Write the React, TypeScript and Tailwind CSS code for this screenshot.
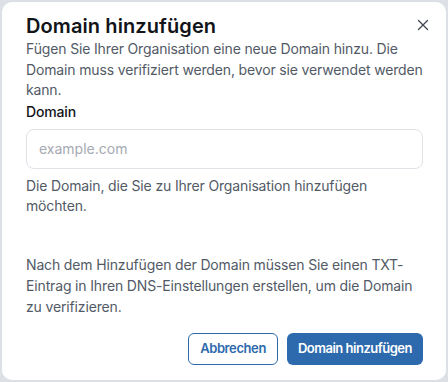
import React from "react";

export default function App() {
  return (
    <div className="w-[448px] h-[382px] bg-[#dde1e6] p-[2px]" style={{ fontFamily: "Inter, 'Noto Sans', sans-serif" }}>
      <div className="h-full w-full bg-white rounded-[10px] pl-[24px] pr-[23px] pt-[11px] flex flex-col">
        <div className="flex items-start justify-between">
          <h2 className="text-[20px] leading-[26px] font-semibold text-[#111418] tracking-[0.1px]">Domain hinzufügen</h2>
          <button className="mt-[5px] mr-[-7px] text-[#3f4650]" aria-label="Schließen">
            <svg width="14" height="14" viewBox="0 0 14 14" fill="none" stroke="currentColor" strokeWidth="1.3" strokeLinecap="round">
              <path d="M2.5 2.5l9 9M11.5 2.5l-9 9" />
            </svg>
          </button>
        </div>
        <p className="text-[14px] leading-[20.5px] text-[#525a66] tracking-[-0.15px]">
          Fügen Sie Ihrer Organisation eine neue Domain hinzu. Die Domain muss verifiziert werden, bevor sie verwendet werden kann.
        </p>
        <label className="mt-[1px] text-[14px] leading-[20px] font-medium text-[#111418] tracking-[-0.15px]">Domain</label>
        <input
          className="mt-[7px] h-[40px] w-full rounded-[8px] border border-[#dfe3e8] px-[12px] text-[14px] text-[#111418] placeholder:text-[#a5aab2] outline-none"
          placeholder="example.com"
        />
        <p className="mt-[7px] text-[14px] leading-[20px] text-[#525a66] tracking-[-0.15px]">
          Die Domain, die Sie zu Ihrer Organisation hinzufügen möchten.
        </p>
        <p className="mt-[38px] text-[14px] leading-[21px] text-[#525a66] tracking-[-0.15px]">
          Nach dem Hinzufügen der Domain müssen Sie einen TXT-Eintrag in Ihren DNS-Einstellungen erstellen, um die Domain zu verifizieren.
        </p>
        <div className="mt-[16px] flex justify-end gap-[9px]">
          <button className="h-[32px] px-[11px] rounded-[6px] border border-[#2d6aad] bg-white text-[13px] font-semibold tracking-[-0.4px] text-[#2d6aad]">
            Abbrechen
          </button>
          <button className="h-[32px] px-[11px] rounded-[6px] bg-[#2d6aad] text-[13px] font-semibold tracking-[-0.5px] text-white">
            Domain hinzufügen
          </button>
        </div>
      </div>
    </div>
  );
}
